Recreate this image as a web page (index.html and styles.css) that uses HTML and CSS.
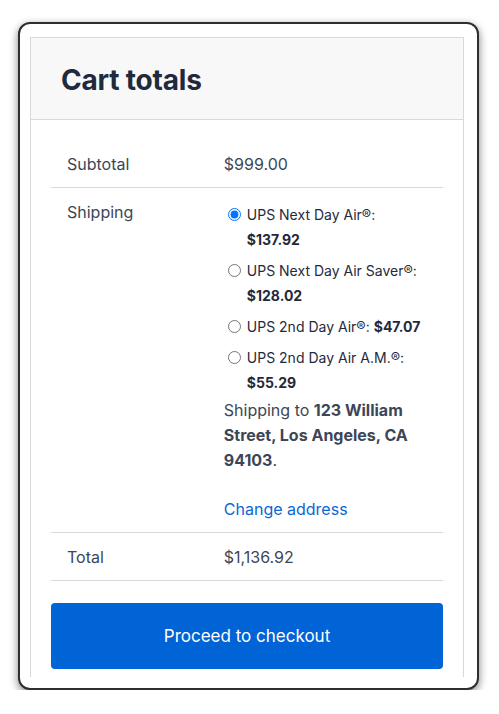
FILE: index.html
```html
<!DOCTYPE html>
<html lang="en">

<head>
    <meta charset="UTF-8">
    <meta name="viewport" content="width=device-width, initial-scale=1.0">
    <title>Cart totals</title>
    <link rel="stylesheet" href="styles.css">
</head>

<body>
    <div class="window">
        <div class="viewport">
            <div class="cart-totals">
                <div class="cart-header">
                    <h2>Cart totals</h2>
                </div>
                <div class="cart-body">
                    <table class="totals-table">
                        <tr>
                            <th>Subtotal</th>
                            <td>$999.00</td>
                        </tr>
                        <tr>
                            <th>Shipping</th>
                            <td>
                                <ul class="shipping-methods">
                                    <li>
                                        <input type="radio" name="shipping" id="ship1" checked>
                                        <label for="ship1">UPS Next Day Air®: <strong>$137.92</strong></label>
                                    </li>
                                    <li>
                                        <input type="radio" name="shipping" id="ship2">
                                        <label for="ship2">UPS Next Day Air Saver®: <strong>$128.02</strong></label>
                                    </li>
                                    <li>
                                        <input type="radio" name="shipping" id="ship3">
                                        <label for="ship3">UPS 2nd Day Air®: <strong>$47.07</strong></label>
                                    </li>
                                    <li>
                                        <input type="radio" name="shipping" id="ship4">
                                        <label for="ship4">UPS 2nd Day Air A.M.®: <strong>$55.29</strong></label>
                                    </li>
                                </ul>
                                <p class="shipping-destination">Shipping to <strong>123 William Street, Los Angeles, CA 94103</strong>.</p>
                                <a href="#" class="change-address">Change address</a>
                            </td>
                        </tr>
                        <tr>
                            <th>Total</th>
                            <td>$1,136.92</td>
                        </tr>
                    </table>
                    <button type="button" class="checkout-button">Proceed to checkout</button>
                </div>
            </div>
        </div>
    </div>
</body>

</html>
```

FILE: styles.css
```css
body {
    margin: 0;
    background: #fff;
    font-family: Inter, "Noto Sans", Arial, sans-serif;
    color: #3c4657;
}

.window {
    margin: 22px 0 0 18px;
    width: 461px;
    height: 668px;
    box-sizing: border-box;
    border: 2px solid #2e2e2e;
    border-radius: 12px;
    background: #fff;
    box-shadow: 0 3px 9px rgba(0, 0, 0, 0.5);
    padding: 13px 13px 11px 10px;
}

.viewport {
    height: 100%;
    overflow: hidden;
}

.cart-totals {
    border: 1px solid #d6d9de;
}

.cart-header {
    background: #f8f8f9;
    border-bottom: 1px solid #d6d9de;
    padding: 3px 30px 0;
    height: 78px;
    display: flex;
    align-items: center;
}

.cart-header h2 {
    margin: 0;
    font-size: 28px;
    font-weight: 700;
    color: #1f2a3c;
    letter-spacing: -0.2px;
}

.cart-body {
    padding: 20px 20px 20px;
}

.totals-table {
    width: 100%;
    border-collapse: collapse;
    font-size: 16px;
    line-height: 24px;
}

.totals-table th,
.totals-table td {
    padding: 12px 16px 11px;
    border-bottom: 1px solid #d6d9de;
    text-align: left;
    vertical-align: top;
}

.totals-table th {
    width: 40%;
    font-weight: 400;
    box-sizing: border-box;
}

.shipping-methods {
    list-style: none;
    margin: 0;
    padding: 2px 0 0;
    font-size: 14px;
    line-height: 25px;
    color: #1f2a3c;
}

.shipping-methods li {
    display: flex;
    align-items: flex-start;
    margin-bottom: 6px;
}

.shipping-methods li:last-child {
    margin-bottom: 3px;
}

.shipping-methods input {
    margin: 6px 6px 0 4px;
    width: 13px;
    height: 13px;
    flex-shrink: 0;
}

.shipping-destination {
    margin: 0 0 24px;
    line-height: 25px;
}

.shipping-destination strong {
    font-weight: 700;
}

.change-address {
    color: #0b66d6;
    text-decoration: none;
}

.checkout-button {
    display: block;
    width: 100%;
    height: 66px;
    margin-top: 22px;
    border: none;
    border-radius: 4px;
    background: #0063d6;
    color: #fff;
    font-family: inherit;
    font-size: 17px;
    cursor: pointer;
}
```
